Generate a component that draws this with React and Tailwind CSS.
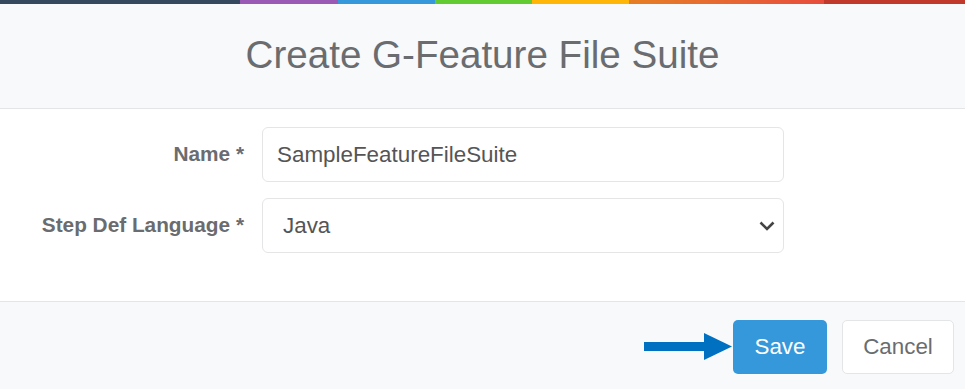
const stripes = [
  { w: "w-[240px]", c: "bg-[#34495e]" },
  { w: "w-[98px]", c: "bg-[#9b59b6]" },
  { w: "w-[97px]", c: "bg-[#3498db]" },
  { w: "w-[97px]", c: "bg-[#62cb31]" },
  { w: "w-[97px]", c: "bg-[#ffb606]" },
  { w: "w-[195px]", c: "bg-gradient-to-r from-[#e67e22] to-[#e74c3c]" },
  { w: "flex-1", c: "bg-[#c0392b]" },
]

const Arrow = () => (
  <svg width="88" height="28" viewBox="0 0 88 28" className="block">
    <rect x="0" y="9" width="61" height="9" fill="#0070c0" />
    <polygon points="60,0 88,13.5 60,27" fill="#0070c0" />
  </svg>
)

const App = () => {
  return (
    <div className="w-[965px] h-[389px] overflow-hidden bg-white font-['Liberation_Sans',Arial,sans-serif] flex flex-col">
      <div className="flex h-[4px]">
        {stripes.map((s, i) => (
          <div key={i} className={`${s.w} ${s.c} h-full`} />
        ))}
      </div>

      <div className="h-[105px] bg-[#f7f9fa] border-b border-[#e4e5e7] flex items-center justify-center">
        <h1 className="text-[38.6px] leading-none text-[#6a6c6f] pb-[2px]">Create G-Feature File Suite</h1>
      </div>

      <div className="pt-[18px] pb-[48px] grid grid-cols-[244px_522px] gap-x-[18px] gap-y-[16px] items-center">
        <label className="text-right font-bold text-[20.8px] text-[#6a6c6f] pb-[2px]">Name *</label>
        <div className="h-[55px] border border-[#e4e5e7] rounded-[6px] flex items-center px-[14px] text-[22.4px] text-[#555]">
          SampleFeatureFileSuite
        </div>
        <label className="text-right font-bold text-[20.8px] text-[#6a6c6f] pb-[2px]">Step Def Language *</label>
        <div className="h-[55px] border border-[#e4e5e7] rounded-[6px] flex items-center justify-between pl-[20px] pr-[8px] text-[22.4px] text-[#555]">
          <span>Java</span>
          <svg width="16" height="10" viewBox="0 0 16 10" className="block">
            <polyline points="1.5,1.5 8,8 14.5,1.5" fill="none" stroke="#444" strokeWidth="2.6" />
          </svg>
        </div>
      </div>

      <div className="flex-1 bg-[#f7f9fa] border-t border-[#e4e5e7] flex justify-end items-start pt-[18px] pr-[11px]">
        <div className="flex items-center">
          <div className="mr-[1px]">
            <Arrow />
          </div>
          <button className="w-[94px] h-[54px] rounded-[5px] bg-[#3498db] text-white text-[22.4px]">Save</button>
          <button className="ml-[15px] w-[112px] h-[54px] rounded-[5px] bg-white border border-[#e4e5e7] text-[#6a6c6f] text-[22.4px]">
            Cancel
          </button>
        </div>
      </div>
    </div>
  )
}

export default App
